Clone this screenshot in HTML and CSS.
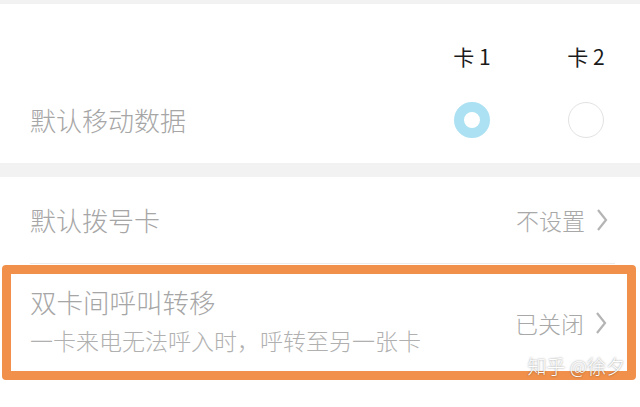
FILE: index.html
```html
<!DOCTYPE html>
<html>
    <head>
        <title>双卡设置</title>
        <link rel="stylesheet" href="styles.css">
    </head>
    <body>
        <div class="band topBand"></div>

        <div class="card dataCard">
            <div class="simHead">
                <span class="label"></span>
                <span class="col">卡 1</span>
                <span class="col">卡 2</span>
            </div>
            <div class="simRow">
                <span class="label">默认移动数据</span>
                <span class="col"><span class="radio on"></span></span>
                <span class="col"><span class="radio"></span></span>
            </div>
        </div>

        <div class="band"></div>

        <div class="card">
            <div class="row">
                <span class="label">默认拨号卡</span>
                <span class="value">不设置</span>
                <svg class="arrow" viewBox="0 0 12 24"><path d="M2 2 L10 12 L2 22"/></svg>
            </div>
            <div class="divider"></div>
            <div class="row marked">
                <div class="texts">
                    <span class="label">双卡间呼叫转移</span>
                    <span class="sub">一卡来电无法呼入时，呼转至另一张卡</span>
                </div>
                <span class="value">已关闭</span>
                <svg class="arrow" viewBox="0 0 12 24"><path d="M2 2 L10 12 L2 22"/></svg>
            </div>
            <div class="mark">知乎 @徐夕</div>
        </div>
    </body>
</html>
```
FILE: styles.css
```css
body{
    margin:0;
    background-color:white;
    font-family:"Noto Sans CJK SC","Noto Sans",sans-serif;
    font-weight:300;
}
.band{
    height:14px;
    background-color:#f2f2f2;
}
.topBand{
    height:4px;
}
.card{
    position:relative;
    background-color:white;
}
.dataCard{
    height:159px;
    box-sizing:border-box;
    padding-top:37px;
}
.simHead, .simRow{
    display:flex;
    align-items:center;
    padding:0 29px 0 30px;
}
.simHead{
    height:30px;
    font-size:21px;
    font-weight:400;
    color:#1a1a1a;
}
.simRow{
    height:50px;
    margin-top:24px;
}
.label{
    flex:1;
    font-size:26px;
    color:#a6a6a6;
    line-height:30px;
}
.col{
    width:50px;
    display:flex;
    justify-content:center;
}
.col + .col{
    margin-left:64px;
}
.radio{
    width:36px;
    height:36px;
    box-sizing:border-box;
    border-radius:50%;
    border:1.5px solid #e2e2e2;
}
.radio.on{
    border:10px solid #ace1f3;
}
.row{
    display:flex;
    align-items:center;
    height:86px;
    padding:0 32px 0 30px;
}
.value{
    font-size:23px;
    color:#a8a8a8;
    margin-right:11px;
}
.arrow{
    width:12px;
    height:24px;
}
.arrow path{
    fill:none;
    stroke:#b4b4b4;
    stroke-width:2.2;
}
.divider{
    height:1px;
    margin:0 25px 0 30px;
    background-color:#ececec;
}
.marked{
    margin:1px 4px 0 2px;
    height:97px;
    padding:0 20px 0 19px;
    border:9px solid #f0904a;
    border-radius:4px;
}
.marked .label{
    font-size:26.5px;
}
.texts{
    flex:1;
    display:flex;
    flex-direction:column;
    padding-bottom:4px;
}
.sub{
    font-size:23px;
    color:#b0b0b0;
    margin-top:9px;
    line-height:28px;
}
.mark{
    position:absolute;
    right:15px;
    top:175px;
    font-size:19px;
    color:white;
    text-shadow:0 0 2px rgba(0,0,0,0.5);
}
```
